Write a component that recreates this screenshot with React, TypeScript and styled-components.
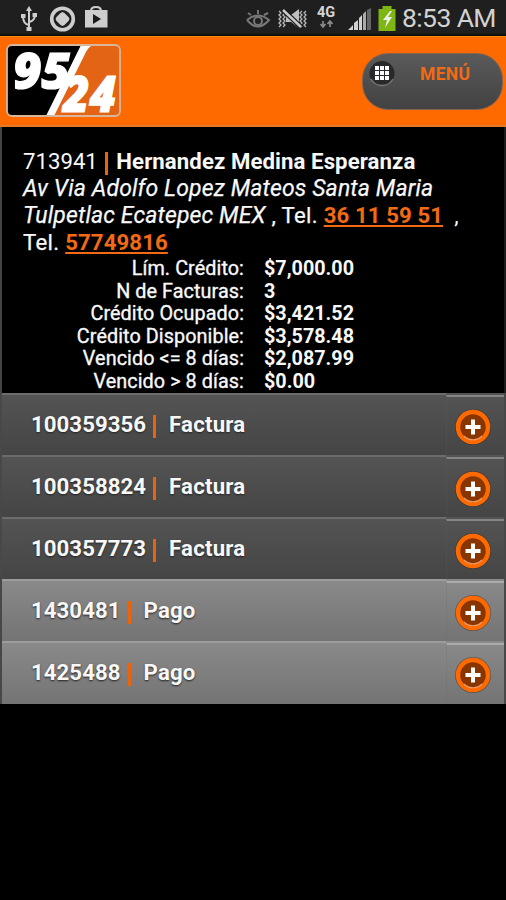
import React from "react";
import styled, { createGlobalStyle } from "styled-components";

const Global = createGlobalStyle`
  *{box-sizing:border-box}
  body{margin:0;background:#000;font-family:Roboto,"Noto Sans",sans-serif;color:#f8f8f8}
`;
const Screen = styled.main`width:506px;height:900px;background:#000;overflow:hidden;`;
const StatusBar = styled.div`
  height:36px;display:flex;justify-content:space-between;background:linear-gradient(#1f1f1f 33px,#080808 36px);
`;
const StatusArt = styled.svg`display:block;flex:none;`;
const StatusRight = styled.div`display:flex;`;
const Clock = styled.time`
  font-size:26.5px;line-height:36px;width:104px;color:#d2d2d2;white-space:nowrap;letter-spacing:-.6px;
`;
const Header = styled.header`
  height:91px;background:#ff6a00;border-top:1px solid #ff9100;border-bottom:2px solid #e27a2b;
  display:flex;justify-content:space-between;align-items:flex-start;padding:7px 3px 0 6px;
`;
const Menu = styled.button`
  width:141px;height:57px;margin-top:9px;padding:0;border:1px solid #85644e;border-radius:26px;
  background:linear-gradient(#5a5a5a,#424242);display:flex;align-items:flex-start;font-family:inherit;
`;
const MenuLabel = styled.span`
  color:#f26a14;font-weight:700;font-size:17.5px;line-height:20px;margin:10px 0 0 24px;letter-spacing:.35px;
`;
const MenuIcon = styled.svg`margin:5px 0 0 5px;flex:none;`;
const Client = styled.section`
  height:266px;padding:21px 0 0 21px;border-left:2px solid #444;border-right:2px solid #1c1c1c;
`;
const Line = styled.div`font-size:22.2px;line-height:27px;height:27px;white-space:pre;`;
const Address = styled.i`font-size:23px;letter-spacing:.13px;-webkit-text-stroke:.25px #f8f8f8;`;
const Plain = styled.span`letter-spacing:.3px;-webkit-text-stroke:.25px #f8f8f8;`;
const Bar = styled.span`display:inline-block;width:3px;height:23px;background:#e9640b;vertical-align:-6px;`;
const ClientBar = styled(Bar)`margin:0 8px 0 2px;`;
const Name = styled.b`letter-spacing:.08px;`;
const Phone = styled.a`
  color:#f26a14;font-weight:700;text-decoration:underline;text-decoration-thickness:2px;
  text-underline-offset:2px;text-decoration-skip-ink:none;letter-spacing:.1px;
`;
const Credit = styled.dl`
  margin:2px 0 0;display:grid;grid-template-columns:221px 1fr;grid-auto-rows:22.5px;column-gap:20px;
  font-size:19.8px;line-height:22.5px;
`;
const Label = styled.dt`text-align:right;letter-spacing:.08px;-webkit-text-stroke:.35px #f8f8f8;`;
const Value = styled.dd`margin:0;font-weight:700;`;
const List = styled.ul`list-style:none;margin:0;padding:0 2px;background:#484848;height:311px;`;
const Row = styled.li<{ $paid: boolean }>`
  height:62px;display:grid;grid-template-columns:444px 58px;
  background:${p => p.$paid ? "linear-gradient(#8a8a8a,#747474)" : "linear-gradient(#545454,#454545)"};
  --edge:${p => p.$paid ? "#9c9c9c" : "#6c6c6c"};
  --cell-edge:${p => p.$paid ? "#ababab" : "#858585"};
  &:last-child{height:63px}
`;
const Entry = styled.div`
  border-top:2px solid var(--edge);padding:15px 0 0 29px;font-size:22.2px;font-weight:700;line-height:28px;
  white-space:nowrap;text-shadow:0 1px 2px #222;letter-spacing:.06px;
`;
const Divider = styled(Bar)`margin:0 13px 0 7px;`;
const Kind = styled.span`letter-spacing:.2px;`;
const Expand = styled.button`
  border:0;border-left:1px solid #6663;border-top:2px solid var(--cell-edge);margin-top:2px;
  padding:10px 0 0 7px;background:transparent;display:flex;align-items:flex-start;
`;

const LeftIcons = () => (
  <StatusArt width="112" height="36" viewBox="0 0 112 36">
    <g stroke="#cecece" fill="none" strokeWidth="2">
      <path d="M29 8v22M29 25q-6-1-6-9M29 22q6-1 6-8"/>
      <path d="M29 6l-3 5h6zM26.500 27h5v4h-5zM21 14h4.500v4H21zM32.500 13H37v4h-4.500z" fill="#cecece" stroke="none"/>
      <circle cx="62.5" cy="19" r="10.8" strokeWidth="3.600"/>
      <path d="M62.500 12l2 1 4 4 1 2-1 2-4 4-2 1-2-1-4-4-1-2 1-2 4-4z" fill="#cecece" stroke="none"/>
      <path d="M91 11q0-4 5-4t5 4"/>
      <path d="M85 10h22.5v17.500H85z" fill="#cecece" stroke="none"/>
      <path d="M93 14l8 5-8 5z" fill="#1b1b1b" stroke="none"/>
    </g>
  </StatusArt>
);
const RightIcons = () => (
  <StatusArt width="156" height="36" viewBox="246 0 156 36">
    <g fill="none" stroke="#777" strokeWidth="2">
      <path d="M247 20q11-9 22 0q-11 13-22 0M251 15l-3-2M258 14v-4M264 15l4-2"/><circle cx="258" cy="21" r="4"/>
      <path d="M279 11l2 2-2 2 2 2-2 2 2 2-2 2 2 2-2 2M283 11l2 2-2 2 2 2-2 2 2 2-2 2 2 2-2 2M302 11l-2 2 2 2-2 2 2 2-2 2 2 2-2 2 2 2M306 11l-2 2 2 2-2 2 2 2-2 2 2 2-2 2 2 2" stroke="#b5b5b5" strokeWidth="1.300"/>
      <path d="M286 15h5l8-6v19l-8-6h-5z" fill="#bebebe" stroke="none"/>
      <path d="M283 10l18 17" stroke="#1b1b1b" strokeWidth="5"/><path d="M283 10l18 17" stroke="#c8c8c8" strokeWidth="2.500"/>
      <path d="M323 21v6M320.500 24l2.500 3 2.500-3M330 27v-6M327.500 24l2.500-3 2.500 3" stroke="#8b8b8b" strokeWidth="1.700"/>
    </g>
    <text x="317" y="17" fill="#d5d5d5" fontFamily="Roboto" fontWeight="700" fontSize="14.500">4G</text>
    <g fill="#d2d2d2"><path d="M348 30l5-5v5zM354 30v-7l4-3v10zM359 30V18l3-3v15z"/><path d="M363 30V14l3-3v19z" fill="#aaa"/><path d="M367 30V10l4-2v22z" fill="#666"/></g>
    <path d="M378.500 9h4V6h9v3h4v22h-17z" fill="#7eb614"/><path d="M390 11l-7 9h4l-2 8 7-11h-4l4-6z" fill="#eee"/>
  </StatusArt>
);
const Logo = () => (
  <svg width="116" height="73" viewBox="0 0 116 73">
    <rect x="1" y="1" width="113" height="71" rx="5" fill="#e36414"/>
    <path d="M6 1h70L43 72H6q-5 0-5-5V6q0-5 5-5z" fill="#000"/>
    <path d="M75 1h12q-5 2-8 9L48 72h-8z" fill="#fff"/>
    <rect x="1" y="1" width="113" height="71" rx="5" fill="none" stroke="#d7b69c" strokeWidth="1.800"/>
    <g fill="#fff" stroke="#fff" strokeWidth="1.200" fontFamily="Open Sans" fontWeight="800" fontStyle="italic">
      <text x="7" y="45" fontSize="50" textLength="57" lengthAdjust="spacingAndGlyphs">95</text>
      <text x="57" y="67.500" fontSize="49" textLength="53" lengthAdjust="spacingAndGlyphs">24</text>
    </g>
  </svg>
);
const Plus = () => (
  <svg width="38" height="39" viewBox="0 0 38 39">
    <circle cx="19" cy="20" r="18" fill="#302720" opacity=".45"/>
    <circle cx="19" cy="20" r="15" fill="#883500" stroke="#ff6a00" strokeWidth="4.500"/>
    <path d="M10 29a12.700 12.700 0 0 0 18 0" fill="none" stroke="#e89a68" strokeWidth="1.200"/>
    <path d="M19 12.500v15M11.500 20h15" stroke="#fff" strokeWidth="4"/>
  </svg>
);
const details = [
  ["Lím. Crédito:", "$7,000.00"], ["N de Facturas:", "3"], ["Crédito Ocupado:", "$3,421.52"],
  ["Crédito Disponible:", "$3,578.48"], ["Vencido <= 8 días:", "$2,087.99"], ["Vencido > 8 días:", "$0.00"],
];
const documents = [
  ["100359356", "Factura"], ["100358824", "Factura"], ["100357773", "Factura"], ["1430481", "Pago"], ["1425488", "Pago"],
];

export default function App() {
  return <><Global/><Screen>
    <StatusBar><LeftIcons/><StatusRight><RightIcons/><Clock>8:53 AM</Clock></StatusRight></StatusBar>
    <Header><Logo/><Menu>
      <MenuIcon width="28" height="29" viewBox="0 0 28 29">
        <circle cx="14" cy="14.500" r="12.500" fill="#29292b"/><path d="M3 20a12.500 12.500 0 0 0 22 0" fill="none" stroke="#777" strokeWidth="1.500"/>
        <path d="M7 7h4v4H7zM12 7h4v4h-4zM17 7h4v4h-4zM7 12h4v4H7zM12 12h4v4h-4zM17 12h4v4h-4zM7 17h4v4H7zM12 17h4v4h-4zM17 17h4v4h-4z" fill="#fff"/>
      </MenuIcon><MenuLabel>MENÚ</MenuLabel>
    </Menu></Header>
    <Client>
      <Line>713941 <ClientBar/><Name>Hernandez Medina Esperanza</Name></Line>
      <Line><Address>Av Via Adolfo Lopez Mateos Santa Maria</Address></Line>
      <Line><Address>Tulpetlac Ecatepec MEX</Address><Plain> , Tel. </Plain><Phone>36 11 59 51</Phone>  ,</Line>
      <Line><Plain>Tel. </Plain><Phone>57749816</Phone></Line>
      <Credit>{details.map(([label, value]) => <React.Fragment key={label}><Label>{label}</Label><Value>{value}</Value></React.Fragment>)}</Credit>
    </Client>
    <List>{documents.map(([id, kind]) => <Row key={id} $paid={kind === "Pago"}>
      <Entry>{id}<Divider/><Kind>{kind}</Kind></Entry><Expand aria-label={kind}><Plus/></Expand>
    </Row>)}</List>
  </Screen></>;
}
